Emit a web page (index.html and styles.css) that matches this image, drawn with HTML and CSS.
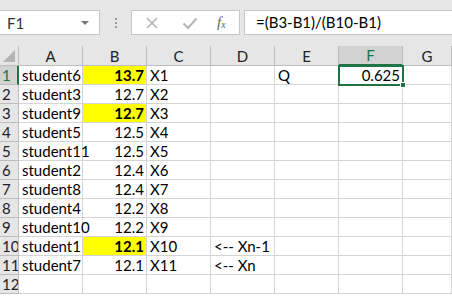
FILE: index.html
```html
<!DOCTYPE html>
<html>
<head>
<meta charset="utf-8">
<link rel="stylesheet" href="styles.css">
</head>
<body>
<div class="toolbar">
  <div class="namebox"><span class="name">F1</span><span class="caret"></span></div>
  <div class="dots"><i></i><i></i><i></i></div>
  <div class="buttons">
    <svg class="ico" width="14" height="14" viewBox="0 0 14 14"><path d="M2 2 L12 12 M12 2 L2 12" stroke="#b4b4b4" stroke-width="1.6" fill="none"/></svg>
    <svg class="ico" width="16" height="14" viewBox="0 0 16 14"><path d="M1.5 7.5 L6 12 L14.5 2.5" stroke="#b4b4b4" stroke-width="2" fill="none"/></svg>
    <span class="fx">f<sub>x</sub></span>
  </div>
  <div class="formula">=(B3-B1)/(B10-B1)</div>
</div>
<div class="sheet">
  <div class="corner"><span class="tri"></span></div>
  <div class="ch">A</div><div class="ch">B</div><div class="ch">C</div><div class="ch">D</div><div class="ch">E</div><div class="ch sel">F</div><div class="ch">G</div>

  <div class="rh sel">1</div><div class="c">student6</div><div class="c n hl">13.7</div><div class="c">X1</div><div class="c"></div><div class="c">Q</div><div class="c n active">0.625<span class="handle"></span></div><div class="c"></div>
  <div class="rh">2</div><div class="c">student3</div><div class="c n">12.7</div><div class="c">X2</div><div class="c"></div><div class="c"></div><div class="c"></div><div class="c"></div>
  <div class="rh">3</div><div class="c">student9</div><div class="c n hl">12.7</div><div class="c">X3</div><div class="c"></div><div class="c"></div><div class="c"></div><div class="c"></div>
  <div class="rh">4</div><div class="c">student5</div><div class="c n">12.5</div><div class="c">X4</div><div class="c"></div><div class="c"></div><div class="c"></div><div class="c"></div>
  <div class="rh">5</div><div class="c">student11</div><div class="c n">12.5</div><div class="c">X5</div><div class="c"></div><div class="c"></div><div class="c"></div><div class="c"></div>
  <div class="rh">6</div><div class="c">student2</div><div class="c n">12.4</div><div class="c">X6</div><div class="c"></div><div class="c"></div><div class="c"></div><div class="c"></div>
  <div class="rh">7</div><div class="c">student8</div><div class="c n">12.4</div><div class="c">X7</div><div class="c"></div><div class="c"></div><div class="c"></div><div class="c"></div>
  <div class="rh">8</div><div class="c">student4</div><div class="c n">12.2</div><div class="c">X8</div><div class="c"></div><div class="c"></div><div class="c"></div><div class="c"></div>
  <div class="rh">9</div><div class="c">student10</div><div class="c n">12.2</div><div class="c">X9</div><div class="c"></div><div class="c"></div><div class="c"></div><div class="c"></div>
  <div class="rh">10</div><div class="c">student1</div><div class="c n hl">12.1</div><div class="c">X10</div><div class="c">&lt;-- Xn-1</div><div class="c"></div><div class="c"></div><div class="c"></div>
  <div class="rh">11</div><div class="c">student7</div><div class="c n">12.1</div><div class="c">X11</div><div class="c">&lt;-- Xn</div><div class="c"></div><div class="c"></div><div class="c"></div>
  <div class="rh">12</div><div class="c"></div><div class="c"></div><div class="c"></div><div class="c"></div><div class="c"></div><div class="c"></div><div class="c"></div>
</div>
</body>
</html>
```

FILE: styles.css
```css
html, body {
  margin: 0;
  padding: 0;
  background: #ffffff;
  width: 452px;
  height: 296px;
  overflow: hidden;
  font-family: "Lato", "Liberation Sans", sans-serif;
  color: #000;
}

.toolbar {
  height: 46px;
  background: #e6e6e6;
  display: flex;
  align-items: flex-start;
  padding-top: 10px;
  box-sizing: border-box;
}

.namebox {
  width: 100px;
  height: 25px;
  box-sizing: border-box;
  background: #fff;
  border: 1px solid #c6c6c6;
  border-left: none;
  display: flex;
  align-items: center;
  justify-content: space-between;
  padding: 0 10px 0 7px;
  font-size: 15px;
  color: #333;
}

.caret {
  width: 0;
  height: 0;
  border-left: 4px solid transparent;
  border-right: 4px solid transparent;
  border-top: 4px solid #777;
}

.dots {
  width: 31px;
  height: 25px;
  display: flex;
  flex-direction: column;
  align-items: center;
  justify-content: center;
  gap: 2px;
}
.dots i {
  width: 2px;
  height: 2px;
  background: #9a9a9a;
}

.buttons {
  width: 109px;
  height: 25px;
  box-sizing: border-box;
  background: #fff;
  border: 1px solid #c6c6c6;
  display: flex;
  align-items: center;
  padding-left: 13px;
  gap: 0;
}
.buttons .ico:first-child { margin-right: 23px; }
.buttons .ico:nth-child(2) { margin-right: 19px; }
.fx {
  font-family: "Liberation Serif", serif;
  font-style: italic;
  font-size: 15px;
  color: #666;
}
.fx sub {
  font-size: 10px;
  vertical-align: -1px;
}

.formula {
  margin-left: 4px;
  flex: 1;
  height: 25px;
  box-sizing: border-box;
  background: #fff;
  border: 1px solid #c6c6c6;
  border-right: none;
  padding-left: 11px;
  font-size: 15px;
  line-height: 23px;
  color: #000;
}

.sheet {
  display: grid;
  grid-template-columns: 19px 64px 64px 64px 64px 64px 64px 1fr;
  grid-template-rows: 20px repeat(12, 19px);
  font-size: 15px;
}

.corner {
  background: #e6e6e6;
  border-right: 1px solid #bdbdbd;
  border-bottom: 1px solid #bdbdbd;
  position: relative;
}
.tri {
  position: absolute;
  right: 3px;
  bottom: 3px;
  width: 0;
  height: 0;
  border-left: 12px solid transparent;
  border-bottom: 12px solid #b4b4b4;
}

.ch {
  background: #e6e6e6;
  border-right: 1px solid #bdbdbd;
  border-bottom: 1px solid #bdbdbd;
  text-align: center;
  line-height: 20px;
  color: #222;
}
.ch.sel {
  background: #d2d2d2;
  border-bottom: 2px solid #217346;
  color: #217346;
  line-height: 19px;
}

.rh {
  background: #e6e6e6;
  border-right: 1px solid #bdbdbd;
  border-bottom: 1px solid #bdbdbd;
  padding-left: 2px;
  line-height: 19px;
  color: #222;
  overflow: hidden;
  white-space: nowrap;
}
.rh.sel {
  background: #d2d2d2;
  border-right: 2px solid #217346;
  color: #217346;
}

.c {
  border-right: 1px solid #d4d4d4;
  border-bottom: 1px solid #d4d4d4;
  padding: 0 2px 0 3px;
  line-height: 19px;
  white-space: nowrap;
  overflow: visible;
  position: relative;
}
.c.n { text-align: right; }
.c.hl {
  background: #ffff00;
  font-weight: bold;
}
.c.active {
  outline: 2px solid #217346;
  outline-offset: -1px;
  z-index: 2;
}
.handle {
  position: absolute;
  right: -4px;
  bottom: -4px;
  width: 6px;
  height: 6px;
  background: #217346;
  border: 1px solid #fff;
  box-sizing: border-box;
}
```
